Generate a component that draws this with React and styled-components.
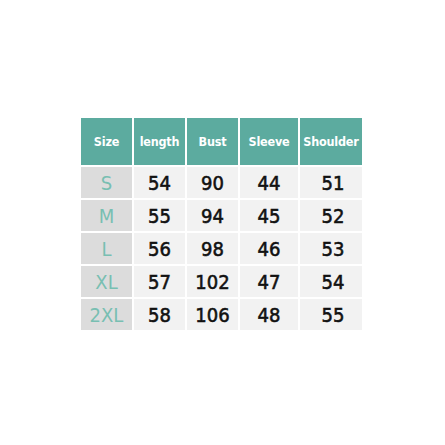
import React from "react";
import styled, { createGlobalStyle } from "styled-components";

const GlobalStyle = createGlobalStyle`
  html, body {
    margin: 0;
    padding: 0;
    background: #ffffff;
  }
`;

const Page = styled.div`
  width: 445px;
  height: 445px;
  padding: 118px 0 0 81px;
  box-sizing: border-box;
`;

const Table = styled.div`
  display: grid;
  grid-template-columns: 51px 51px 51px 58px 62px;
  grid-template-rows: 47px repeat(5, 31px);
  column-gap: 2px;
  row-gap: 2px;
`;

const HeadCell = styled.div`
  background: #5cab9f;
  color: #ffffff;
  font-family: "DejaVu Sans Condensed", "DejaVu Sans", sans-serif;
  font-stretch: condensed;
  font-weight: 700;
  font-size: 12.5px;
  letter-spacing: -0.2px;
  display: flex;
  align-items: center;
  justify-content: center;
  white-space: nowrap;
  overflow: hidden;
`;

const SizeCell = styled.div`
  background: #dcdcdc;
  color: #78bfb2;
  font-family: "DejaVu Sans Condensed", "DejaVu Sans", sans-serif;
  font-stretch: condensed;
  font-weight: 400;
  font-size: 20px;
  display: flex;
  align-items: center;
  justify-content: center;
`;

const ValueCell = styled.div`
  background: #f2f2f2;
  color: #111111;
  font-family: "DejaVu Sans Condensed", "DejaVu Sans", sans-serif;
  font-stretch: condensed;
  font-weight: 400;
  font-size: 20px;
  -webkit-text-stroke: 0.55px #111111;
  display: flex;
  align-items: center;
  justify-content: center;
  padding-left: ${(p) => (p.$shift ? "4px" : "0")};
`;

const HEADERS = ["Size", "length", "Bust", "Sleeve", "Shoulder"];

const ROWS = [
  ["S", 54, 90, 44, 51],
  ["M", 55, 94, 45, 52],
  ["L", 56, 98, 46, 53],
  ["XL", 57, 102, 47, 54],
  ["2XL", 58, 106, 48, 55],
];

export default function App() {
  return (
    <Page>
      <GlobalStyle />
      <Table>
        {HEADERS.map((h) => (
          <HeadCell key={h}>{h}</HeadCell>
        ))}
        {ROWS.map(([size, ...vals]) => (
          <React.Fragment key={size}>
            <SizeCell>{size}</SizeCell>
            {vals.map((v, i) => (
              <ValueCell key={i} $shift={i === 3}>
                {v}
              </ValueCell>
            ))}
          </React.Fragment>
        ))}
      </Table>
    </Page>
  );
}
